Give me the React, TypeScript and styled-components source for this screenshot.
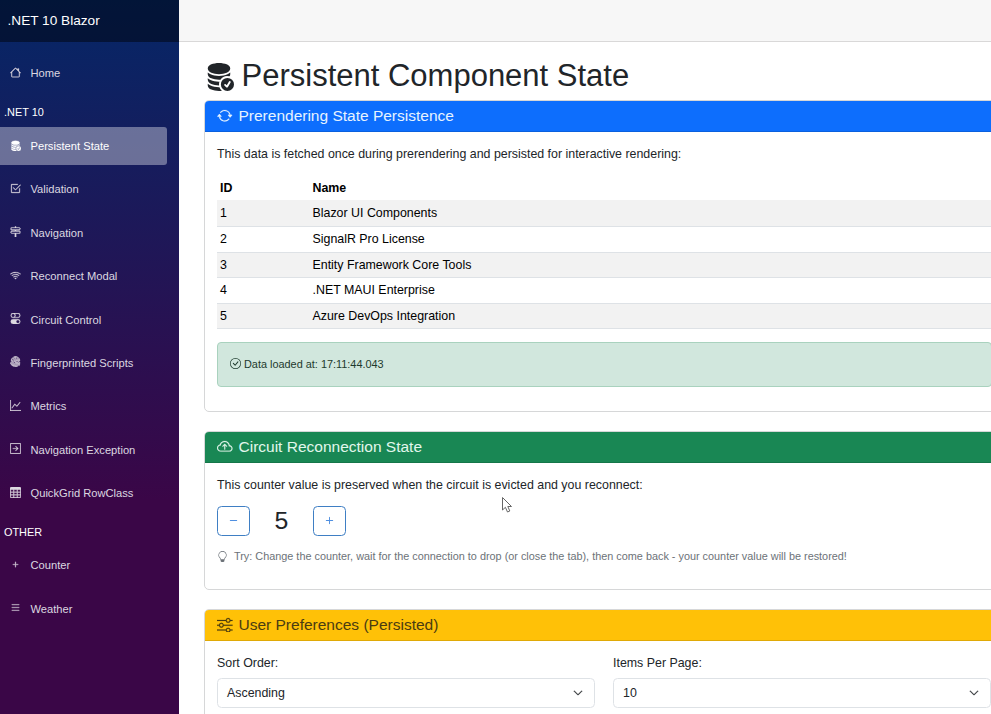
import React from 'react';
import styled, { createGlobalStyle } from 'styled-components';
import {
  BsArrowRepeat,
  BsArrowRightSquare,
  BsCheck2Square,
  BsCheckCircle,
  BsChevronDown,
  BsCloudArrowUp,
  BsDash,
  BsDatabaseFillCheck,
  BsFingerprint,
  BsGraphUp,
  BsHouse,
  BsLightbulb,
  BsList,
  BsPlus,
  BsSignpost2,
  BsSliders,
  BsTable,
  BsToggles,
  BsWifi,
} from 'react-icons/bs';
import type { IconType } from 'react-icons';

const GlobalStyle = createGlobalStyle`
  *, *::before, *::after { box-sizing: border-box; }
  body {
    margin: 0;
    overflow: hidden;
    background: #fff;
    color: #212529;
    font-family: "Liberation Sans", Arial, sans-serif;
    font-size: 12.4px;
    line-height: 18.6px;
  }
`;

const Page = styled.div`
  display: flex;
  width: 100%;
  height: 714px;
  overflow: hidden;
`;

const Sidebar = styled.aside`
  flex: 0 0 179px;
  background: linear-gradient(180deg, #052767 0%, #3a0647 70%);
`;

const Brand = styled.div`
  height: 42px;
  padding: 1px 0 0 7.5px;
  display: flex;
  align-items: center;
  background: rgba(0, 0, 0, 0.45);
  color: #fff;
  font-size: 13.65px;
`;

const Nav = styled.nav`
  display: flex;
  flex-direction: column;
  padding-top: 12.4px;
`;

const NavLink = styled.a<{ $active?: boolean }>`
  display: flex;
  align-items: center;
  gap: 9.5px;
  width: 167px;
  height: 37.2px;
  margin-bottom: 6.2px;
  padding: 0.6px 0 0 10px;
  border-radius: 0 3px 3px 0;
  font-size: 11.17px;
  color: ${({ $active }) => ($active ? '#fff' : '#dcd8e0')};
  background: ${({ $active }) => ($active ? 'rgba(255, 255, 255, 0.37)' : 'transparent')};

  svg {
    flex: none;
    margin-bottom: 2.5px;
    stroke: currentColor;
    stroke-width: 0.4px;
  }
`;

const NavHeading = styled.div<{ $height: number }>`
  height: ${({ $height }) => $height}px;
  padding: 5px 0 0 4px;
  color: #fff;
  font-size: 10.9px;
`;

const Main = styled.main`
  flex: 1;
  min-width: 0;
  overflow: hidden;
`;

const TopBar = styled.div`
  height: 42px;
  background: #f7f7f7;
  border-bottom: 1px solid #d9d8d8;
`;

const Content = styled.div`
  width: 825px;
  padding: 15px 0 0 25px;
`;

const Title = styled.h1`
  display: flex;
  align-items: center;
  gap: 7.5px;
  height: 37px;
  margin: 0 0 6px;
  font-size: 31px;
  font-weight: 400;
  line-height: 37px;

  svg {
    flex: none;
  }
`;

const Card = styled.section<{ $height: number }>`
  width: 799px;
  height: ${({ $height }) => $height}px;
  margin-bottom: 19px;
  border: 1px solid #d6d7d8;
  border-radius: 5px;
  overflow: hidden;
`;

const CardHeader = styled.h5<{ $bg: string; $color: string }>`
  display: flex;
  align-items: center;
  gap: 6px;
  height: 32px;
  margin: -1px -1px 0;
  padding: 1px 0 0 13px;
  background: ${({ $bg }) => $bg};
  color: ${({ $color }) => $color};
  border-bottom: 1px solid rgba(0, 0, 0, 0.12);
  font-size: 15.5px;
  font-weight: 400;

  svg {
    margin-top: -1px;
    stroke: currentColor;
    stroke-width: 0.2px;
  }
`;

const CardBody = styled.div`
  padding: 13px 10px 0 12px;
`;

const Text = styled.p`
  margin: 0 0 11.4px;
`;

const Table = styled.table`
  width: 100%;
  border-collapse: collapse;
  table-layout: fixed;
  color: #000;

  th, td {
    height: 25.6px;
    padding: 0 3px;
    text-align: left;
    border-bottom: 1px solid #dee2e6;
  }
  th {
    height: 26px;
    padding-top: 1px;
    border-bottom-color: #f2f2f2;
  }
  th:first-child { width: 92.5px; }
  tbody tr:nth-child(odd) { background: #f2f2f2; }
`;

const Alert = styled.div`
  display: flex;
  align-items: center;
  gap: 3px;
  height: 45px;
  margin-top: 12.4px;
  padding: 0 0 1px 12px;
  border: 1px solid #a9d2be;
  border-radius: 4px;
  background: #d1e7dd;
  color: #1d3a2d;
  font-size: 10.9px;
`;

const Counter = styled.div`
  display: flex;
  align-items: center;
  height: 30px;
`;

const CounterButton = styled.button`
  display: flex;
  align-items: center;
  justify-content: center;
  width: 33px;
  height: 30px;
  padding: 0;
  border: 1px solid #3f7fc4;
  border-radius: 4.5px;
  background: #fff;
  color: #4f8fe0;
`;

const CounterValue = styled.span`
  width: 63px;
  text-align: center;
  font-size: 24.8px;
  line-height: 30px;
`;

const Hint = styled.small`
  display: flex;
  align-items: center;
  gap: 6px;
  margin-top: 11px;
  color: #6c7278;
  font-size: 10.86px;
`;

const Fields = styled.div`
  display: grid;
  grid-template-columns: 378px 378px;
  column-gap: 18px;
`;

const Label = styled.label`
  display: block;
  margin-bottom: 5.5px;
`;

const Select = styled.div`
  display: flex;
  align-items: center;
  justify-content: space-between;
  height: 30px;
  padding: 0 11px 0 9px;
  border: 1px solid #dee2e6;
  border-radius: 4.5px;
`;

const Pointer = styled.svg`
  position: absolute;
  left: 501px;
  top: 496px;
`;

type Item = { icon: IconType; label: string; active?: boolean };

const features: Item[] = [
  { icon: BsDatabaseFillCheck, label: 'Persistent State', active: true },
  { icon: BsCheck2Square, label: 'Validation' },
  { icon: BsSignpost2, label: 'Navigation' },
  { icon: BsWifi, label: 'Reconnect Modal' },
  { icon: BsToggles, label: 'Circuit Control' },
  { icon: BsFingerprint, label: 'Fingerprinted Scripts' },
  { icon: BsGraphUp, label: 'Metrics' },
  { icon: BsArrowRightSquare, label: 'Navigation Exception' },
  { icon: BsTable, label: 'QuickGrid RowClass' },
];

const others: Item[] = [
  { icon: BsPlus, label: 'Counter' },
  { icon: BsList, label: 'Weather' },
];

const products = [
  'Blazor UI Components',
  'SignalR Pro License',
  'Entity Framework Core Tools',
  '.NET MAUI Enterprise',
  'Azure DevOps Integration',
];

const NavItem = ({ icon: Icon, label, active }: Item) => (
  <NavLink $active={active}>
    <Icon size={11} />
    {label}
  </NavLink>
);

export default function App() {
  return (
    <>
      <GlobalStyle />
      <Page>
        <Sidebar>
          <Brand>.NET 10 Blazor</Brand>
          <Nav>
            <NavItem icon={BsHouse} label="Home" />
            <NavHeading $height={29.7}>.NET 10</NavHeading>
            {features.map((item) => <NavItem key={item.label} {...item} />)}
            <NavHeading $height={29}>OTHER</NavHeading>
            {others.map((item) => <NavItem key={item.label} {...item} />)}
          </Nav>
        </Sidebar>
        <Main>
          <TopBar />
          <Content>
            <Title><BsDatabaseFillCheck size={30} />Persistent Component State</Title>

            <Card $height={312}>
              <CardHeader $bg="#0d6efd" $color="#e6f3ff">
                <BsArrowRepeat size={15.5} />Prerendering State Persistence
              </CardHeader>
              <CardBody>
                <Text>This data is fetched once during prerendering and persisted for interactive rendering:</Text>
                <Table>
                  <thead><tr><th>ID</th><th>Name</th></tr></thead>
                  <tbody>
                    {products.map((name, i) => (
                      <tr key={name}><td>{i + 1}</td><td>{name}</td></tr>
                    ))}
                  </tbody>
                </Table>
                <Alert><BsCheckCircle size={11} />Data loaded at: 17:11:44.043</Alert>
              </CardBody>
            </Card>

            <Card $height={159}>
              <CardHeader $bg="#198754" $color="#e2f7ec">
                <BsCloudArrowUp size={15.5} />Circuit Reconnection State
              </CardHeader>
              <CardBody>
                <Text>This counter value is preserved when the circuit is evicted and you reconnect:</Text>
                <Counter>
                  <CounterButton><BsDash size={15} /></CounterButton>
                  <CounterValue>5</CounterValue>
                  <CounterButton><BsPlus size={15} /></CounterButton>
                </Counter>
                <Hint>
                  <BsLightbulb size={11} />
                  Try: Change the counter, wait for the connection to drop (or close the tab), then come back - your counter value will be restored!
                </Hint>
              </CardBody>
            </Card>

            <Card $height={159}>
              <CardHeader $bg="#ffc107" $color="#4a3c12">
                <BsSliders size={15.5} />User Preferences (Persisted)
              </CardHeader>
              <CardBody>
                <Fields>
                  <div>
                    <Label>Sort Order:</Label>
                    <Select>Ascending<BsChevronDown size={10} strokeWidth={0.8} /></Select>
                  </div>
                  <div>
                    <Label>Items Per Page:</Label>
                    <Select>10<BsChevronDown size={10} strokeWidth={0.8} /></Select>
                  </div>
                </Fields>
              </CardBody>
            </Card>
          </Content>
        </Main>
      </Page>
      <Pointer width="12" height="18" viewBox="0 0 12 18">
        <path d="M1.5 1.5V14L4.4 11.3L6.5 16L8.8 15L6.8 10.5H10.5Z" fill="#fff" stroke="#666" strokeWidth="1" />
      </Pointer>
    </>
  );
}
